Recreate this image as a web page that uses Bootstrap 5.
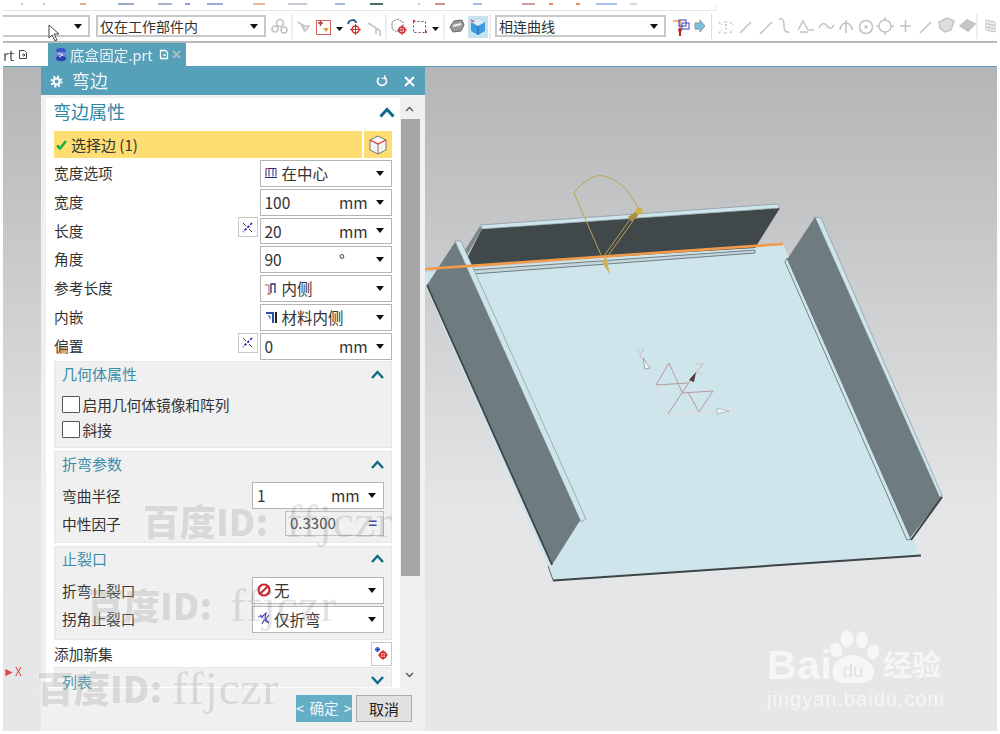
<!DOCTYPE html>
<html lang="zh-CN">
<head>
<meta charset="utf-8">
<title>弯边</title>
<link href="https://cdn.jsdelivr.net/npm/bootstrap@5.3.0/dist/css/bootstrap.min.css" rel="stylesheet">
<style>
html,body{height:734px;overflow:hidden;background:#fff}
body{font-family:"Noto Sans CJK SC","Noto Sans",sans-serif;color:#333;font-size:14.7px;line-height:1.2;position:relative}
.ug-shell{height:731px;margin:0 3px;display:flex;flex-direction:column;filter:blur(.35px)}
.ug-top{height:43px;flex:none;border-bottom:2px solid #b5babc}
.ug-strip{display:block;height:11px}
.ug-bar{height:30px}
.ug-bar svg{flex:none}
.ug-combo{height:22px;background:#fff;border:2px solid #c6c8ca;font-size:14px;color:#333;padding:0 6px 0 2px;flex:none}
.ug-combo.c1{width:87px;border-left:0}
.ug-combo.c2{width:170px;margin-left:6px}
.ug-combo.c3{width:171px}
.ug-caret{width:0;height:0;border-left:4.5px solid transparent;border-right:4.5px solid transparent;border-top:5px solid #111;flex:none}
.ug-tabs{height:23px;flex:none;font-size:14.6px;white-space:nowrap}
.ug-tabs svg{flex:none}
.ug-tabs .t0{width:45px;color:#555;overflow:hidden}
.ug-tab{width:138px;background:#57a0ba;color:#e8f2f6;padding-left:6px}
.ug-tab .nm{margin-left:2px}
.ug-tab .dc{margin-left:6px}
.ug-tab .xx{margin-left:3px}
.ug-view{flex:1;position:relative;border-top:1px solid #57a0ba;background:linear-gradient(#b4b5b7 0,#e4e5e7 66%,#e6e7e9 100%)}
.ug-scene{position:absolute;left:0;top:0;display:block}
.ug-dlg{position:absolute;left:38px;top:0;bottom:0;width:384px;background:#f0f0f0;display:flex;flex-direction:column}
.ug-title{height:28px;flex:none;background:#57a0ba;color:#f2f7f9;font-size:18px;padding:0 10px 0 9px}
.ug-title span{margin-left:9px}
.ug-mid{height:590px;flex:none;margin:3px 0 0 5px;display:flex}
.ug-panel{width:354px;height:590px;background:#fff;padding:0 8px;flex:none}
.ug-head{height:28px;margin-bottom:5px;font-size:18px;color:#2f86a4}
.ug-head span{margin-left:-1px}
.ug-head svg{margin-right:-3px}
.ug-hit{height:27px;margin-bottom:2px;gap:2px;font-size:15px}
.ug-hit .m1{flex:1;background:#fedd72;padding-left:2px;gap:4px;color:#333}
.ug-hit .m2{width:28px;background:#fedd72}
.ug-rows{display:flex;flex-direction:column;gap:2px}
.ug-row{height:26.8px}
.ug-row>span{margin-top:-1px}
.ug-sel{height:26.8px;width:132.5px;background:#fff;border:1px solid #b4b4b4;padding:0 7px 0 4px;flex:none;font-size:15.5px}
.ug-sel .tx{flex:1;white-space:nowrap}
.ug-sel .un{width:28px;margin-right:9px;text-align:left}
.ug-sel.wide{width:132px}
.ug-sel .ic{margin-right:5px;flex:none}
.ug-fx{width:20px;height:20px;background:#fff;border:1px solid #c8c8c8;margin-right:2px;margin-top:-7px}
.ug-grp{background:#f0f0f0;border:1px solid #e6e6e6;padding:0 7px;overflow:hidden}
.ug-grp .gh{height:24px;color:#3a8dab;font-size:15px}
.g1{height:87px;margin-top:1.500px}
.g2{height:92px;margin-top:3px}
.g3{height:94px;margin-top:3px}
.g4{height:20px;overflow:visible;border-bottom:0}
.g3 .gh{height:23px}
.ug-grp.g4 .gh{height:28px}
.g4 .gh svg{margin-top:-4px}
.ug-add{height:27px}
.ug-addb{width:21px;height:24px;background:#fff;border:1px solid #c8c8c8}
.ug-chk{height:25px;gap:3px}
.ug-chk .form-check-input{width:17.5px;height:17.5px;margin:0;border:1px solid #555;border-radius:1px;flex:none}
.ug-chk span{margin-top:1px}
.ug-chks{margin-top:6px}
.ug-ro{height:25px;width:99px;border:1px solid #bdbdbd;padding:0 6px 0 4px;font-size:15px;color:#444}
.ug-ro b{font-weight:700;color:#3a3a9a}
.ug-tight{margin-top:-2px}
.ug-gap2{gap:2px}
.ug-b2{margin-top:6px}
.ug-b3{margin-top:7px}
.ug-scroll{width:19px;height:590px;flex:none}
.ug-arrow{height:21px}
.ug-arrow.dn{height:16px}
.ug-thumb{height:457px;background:#a6a6a6;width:19px;margin-left:1px;flex:none}
.ug-fill{flex:1}
.ug-foot{padding:7px 13px 0 0;gap:4px}
.ug-foot .btn{height:27px;width:56px;padding:0;font-size:14.6px;border-radius:0;line-height:1}
.ug-foot .ug-no{font-size:15px}
.ug-ok{background:#66aec5;border:0;color:#eef7fa;white-space:nowrap;word-spacing:2px}
.ug-no{background:#e1e1e1;border:1px solid #adadad;color:#222}
.ug-nudge{margin-left:-2px}
.ug-wm{position:absolute;display:flex;align-items:center;color:rgba(60,60,60,.14);white-space:nowrap;pointer-events:none;text-shadow:0 0 9px rgba(255,255,255,.35);line-height:1;filter:blur(.35px)}
.ug-wm b{font-family:"Noto Sans CJK SC",sans-serif;font-weight:900;font-size:36.500px}
.ug-wm i{font-family:"Liberation Serif",serif;font-style:normal;font-size:47px;margin-left:18px;letter-spacing:1px}
.w1{left:143px;top:498px}.w2{left:87px;top:582px}.w3{left:37px;top:665px}
.w3 i{margin-left:10px}
.ug-logo{position:absolute;left:767px;top:625px;width:180px;height:90px;color:rgba(255,255,255,.62);pointer-events:none;filter:blur(.35px)}
.ug-logo .bai{position:absolute;left:0;top:20px;font:700 41px/1 "Liberation Sans",sans-serif;letter-spacing:.5px}
.ug-logo .jy{position:absolute;left:116px;top:24px;font:700 29px/1 "Noto Sans CJK SC",sans-serif}
.ug-logo .url{position:absolute;left:0;top:64px;font:400 20px/1 "Liberation Sans",sans-serif;letter-spacing:1px}
.ug-logo svg{position:absolute;left:56px;top:5px}
.ug-cursor{position:absolute;left:47px;top:24px}
.ug-red{position:absolute;left:3px;top:665px;font-size:12px;color:#e04a4a;line-height:1}
</style>
</head>
<body>
<div class="ug-shell">
  <div class="ug-top">
    <svg class="ug-strip" width="994" height="11" viewBox="3 0 994 11" fill="none">
      <path d="M3 10.500H716V4" stroke="#e6e6e6"/>
      <g stroke-width="2">
        <path d="M21 4h2M43 4h2" stroke="#b8c4d8"/><path d="M80 4h6" stroke="#e8b090"/><path d="M118 4h16" stroke="#9aa8c0"/>
        <path d="M158 4h14" stroke="#a8b4c4"/><path d="M185 4h5" stroke="#8aa4d0"/><path d="M207 4h16" stroke="#a0a8d8"/>
        <path d="M253 4h12" stroke="#e8b898"/><path d="M288 4h19" stroke="#c4c8d0"/><path d="M335 4h10" stroke="#a8b8d0"/>
        <path d="M370 4h13" stroke="#4a7068"/><path d="M418 4h2" stroke="#c0c0d0"/><path d="M435 4h10" stroke="#d09090"/>
        <path d="M473 4h9" stroke="#a8c0d8"/><path d="M522 4h13" stroke="#c8a098"/><path d="M549 4h4M576 4h4" stroke="#e88868"/>
        <path d="M596 4h21" stroke="#a8c0e8"/><path d="M630 4h7" stroke="#d8d8d8"/>
      </g>
    </svg>
    <div class="ug-bar d-flex align-items-center">
      <div class="ug-combo c1 d-flex align-items-center justify-content-end"><span class="ug-caret"></span></div>
      <div class="ug-combo c2 d-flex align-items-center justify-content-between"><span>仅在工作部件内</span><span class="ug-caret"></span></div>
      <svg width="229" height="30" viewBox="265 11 229 30" fill="none">
        <path d="M291 14v25M385 14v25M443 14v25M489 14v25" stroke="#dcdcdc"/>
        <g stroke="#c4c4c4" stroke-width="1.600">
          <circle cx="279" cy="23" r="3.500"/><circle cx="274" cy="29" r="3"/><circle cx="283" cy="30" r="3"/>
          <path d="M297 22l6 4v5M308 26h-7l3 5zM367 23l8 5v6M375 28l4 3v5"/>
        </g>
        <rect x="315.500" y="20.500" width="14" height="14" stroke="#d66060"/>
        <path d="M317 23h5M319.500 21v5" stroke="#a04040" stroke-width="1.500"/><path d="M322 28h6l-3 4z" fill="#e0a030"/>
        <path d="M335 27h7l-3.500 4zM431 27h7l-3.500 4z" fill="#111"/>
        <path d="M347 24c1-5 8-5 8-1" stroke="#2a5a90" stroke-width="2"/><circle cx="354.500" cy="29.500" r="3.500" stroke="#d03030" stroke-width="1.500"/><path d="M349 29.500h11M354.500 24v11" stroke="#d03030"/>
        <path d="M396 19l6 3v7l-6 3-5-3v-7z" stroke="#777" stroke-dasharray="2 1"/><circle cx="401" cy="30" r="3" stroke="#d03030" stroke-width="1.500"/><path d="M396 30h10M401 25v10" stroke="#d03030"/>
        <rect x="412.500" y="21.500" width="12" height="11" stroke="#555" stroke-dasharray="2 2"/><path d="M412 21h2M424 32h2" stroke="#d03030" stroke-width="2"/>
        <path d="M449 27l4-6 8-1 2 5-3 6-8 1z" fill="#9a9a9a" stroke="#666"/><path d="M452 26l8-2" stroke="#eee" stroke-width="2"/>
        <rect x="467" y="16" width="20" height="22" fill="#c5e2ee"/>
        <path d="M470 22l7-4 7 4v9l-7 4-7-4z" fill="#3f9be0"/><path d="M470 22l7 4 7-4-7-4z" fill="#d8eaf6"/><path d="M477 26v9" stroke="#1d6ab0"/><path d="M470 20l3 2" stroke="#e04040" stroke-width="1.500"/>
      </svg>
      <div class="ug-combo c3 d-flex align-items-center justify-content-between"><span>相连曲线</span><span class="ug-caret"></span></div>
      <svg width="333" height="30" viewBox="664 11 333 30" fill="none">
        <path d="M671 21h8M678 21v8" stroke="#e8a030" stroke-width="1.500"/><rect x="677" y="20" width="7" height="6" stroke="#3a3ad0"/><rect x="680" y="23" width="7" height="6" stroke="#3a3ad0"/>
        <path d="M678 29v7" stroke="#c02020" stroke-width="2"/><circle cx="678" cy="30" r="2" fill="#b03030"/>
        <path d="M693 23h5v-3l5 6-5 6v-3h-5z" fill="#7fc0d8" stroke="#8a9aa0"/>
        <path d="M709.500 14v25M975 14v25" stroke="#dcdcdc"/>
        <g stroke="#c2c2c2" stroke-width="1.500">
          <path d="M717 22l3 3M728 22l3 3M717 33l3-3M728 33l3-3M722 22h4M722 33h4M724 24v7" stroke-dasharray="2 1.500"/>
          <path d="M738 33l11-11M758 34l12-12M777 19c5-1 5 3 5 6s0 8 5 7"/>
          <path d="M796 30l5-9 5 9M806 30h6M798 32h8"/><path d="M817 28c3-6 6-5 8-2s5 3 7-1"/>
          <path d="M838 30c0-5 4-7 6-7s6 2 6 7M844 20v13"/>
          <circle cx="864" cy="27" r="6.500"/><circle cx="864" cy="27" r="1"/><circle cx="883" cy="26" r="6"/><path d="M883 17v3M883 32v3M874 26h3M889 26h3"/>
          <path d="M898 26h11M903.500 20v12M918 33l11-11"/>
          <path d="M937 22l8-4 7 3-3 9-6 2-5-4z" fill="#dedede"/><path d="M958 26l7-6 8 4-7 7z" fill="#c8c8c8"/><path d="M960 26l9 3M963 23l8 4"/>
          <path d="M984 20l9 2v10l-9-2zM984 23.500l9 2M984 27l9 2M987 21v10M990 21v10" stroke-width="1"/>
        </g>
      </svg>
    </div>
  </div>
  <div class="ug-tabs d-flex">
    <div class="t0 d-flex align-items-center"><span>rt</span>
      <svg class="ms-1" width="10" height="11" viewBox="0 0 10 11" fill="none" stroke="#444"><path d="M1.500 1.500h5l2 2v6h-7z"/><path d="M4 6h3M5.500 4.500l1.500 1.500-1.500 1.500"/></svg></div>
    <div class="ug-tab d-flex align-items-center">
      <svg width="14" height="15" viewBox="0 0 14 15"><ellipse cx="7" cy="3.500" rx="5" ry="2.500" fill="#3d55c8"/><ellipse cx="7" cy="7.500" rx="5.500" ry="2.800" fill="#7482dc"/><ellipse cx="7" cy="11.500" rx="5" ry="2.800" fill="#2f3eb0"/><path d="M4 6l5 2-4 2" stroke="#e8ecff" fill="none"/></svg>
      <span class="nm">底盒固定.prt</span>
      <svg class="dc" width="10" height="11" viewBox="0 0 10 11" fill="none" stroke="#fff" stroke-width="1.300"><path d="M1.500 1.500h5l2 2v6h-7z"/><path d="M4 6h3"/></svg>
      <svg class="xx" width="9" height="9" viewBox="0 0 9 9" stroke="#a8bcc6" stroke-width="2"><path d="M1 1l7 7M8 1l-7 7"/></svg>
    </div>
  </div>
  <div class="ug-view">
    <svg class="ug-scene" width="994" height="664" viewBox="3 67 994 664" fill="none">
      <polygon points="425,272 783,244 919,553 921,556 553,581 548,566 425,285" fill="#cfe5ec"/>
      <path d="M553 580.500L921 555.500" stroke="#3c4446" stroke-width="2"/>
      <path d="M548 566l5 14" stroke="#5c6a6e"/>
      <polygon points="480,226 482,229 463,262 460,258" fill="#7b898d"/>
      <polygon points="482,229 780,208 755,248 463,266" fill="#40484a"/>
      <polygon points="481,225 778,204 780,208 482,229" fill="#cfe5ec" stroke="#7b8a8e" stroke-width=".6"/>
      <polygon points="472,270 755,250 755,253 473,274" fill="#c4d6dc" stroke="#59666a" stroke-width=".8"/>
      <polygon points="427,285 455,242 581,519 552,565" fill="#6e7c80"/>
      <path d="M427 285L552 565" stroke="#3c4446" stroke-width="1.800"/>
      <polygon points="455,241 461,241 586,519 581,522" fill="#cfe5ec" stroke="#6b787c" stroke-width=".5"/>
      <polygon points="786,262 788,258 815,217 942,497 910,538" fill="#6e7c80"/>
      <polygon points="815,217 821,218 942,495 940,498" fill="#cfe5ec" stroke="#6b787c" stroke-width=".5"/>
      <path d="M942 497L911 540" stroke="#3c4446" stroke-width="2"/>
      <polygon points="785,262 787,258 911,539 907,540" fill="#cfe5ec" stroke="#5c6a6e" stroke-width=".8"/>
      <path d="M425 269L783 244" stroke="#f29a4a" stroke-width="2.600"/>
      <path d="M601 255L574 193C583 180 596 174 603 176C618 178 632 194 638 208" stroke="#bda354" stroke-width="1"/>
      <path d="M604 256L631 218M607 257L633 221" stroke="#b8a052"/>
      <polygon points="628,217 637,211 638,216 632,222" fill="#a88f3e"/>
      <circle cx="639" cy="211" r="3.600" fill="#d0b24c"/>
      <polygon points="602,262 606,256 610,275" fill="#cdb35c"/>
      <g stroke-width="1">
        <path d="M668 414L644 362M668 414L726 411" stroke="#dcdcdc" stroke-width="1.400"/>
        <path d="M656 385l13-22 13 29M656 385l32-2M682 393l31-2-14 21M668 414l24-36M688 392l11 20" stroke="#b79a9e"/>
        <path d="M637 349l3.500 5 3.500-5M640.500 354v4M696 364h7l-7 9h7" stroke="#cfc4c6" stroke-width="1.200"/>
        <path d="M730 406l8 9M738 406l-8 9" stroke="#dddfe2" stroke-width="1.200"/>
      </g>
      <polygon points="643,358 650,368 645,369" fill="#f2f4f4" stroke="#70787a" stroke-width=".6"/>
      <polygon points="717,408 729,411 717,414" fill="#eef0f0" stroke="#8a9294" stroke-width=".5"/>
      <polygon points="696,372 694,382 689,380" fill="#52383e"/>
    </svg>
    <div class="ug-dlg">
      <div class="ug-title d-flex align-items-center">
        <svg width="13" height="13" viewBox="0 0 13 13" fill="none" stroke="#fff"><circle cx="6.500" cy="6.500" r="3" stroke-width="2"/><circle cx="6.500" cy="6.500" r="5" stroke-width="2" stroke-dasharray="2 1.930"/></svg>
        <span class="flex-grow-1">弯边</span>
        <svg class="me-3" width="12" height="12" viewBox="0 0 12 12" fill="none" stroke="#fff" stroke-width="1.600"><path d="M3 2.500A4.500 4.500 0 1 0 9 2.500"/><path d="M9 0l-.5 3.500L5.500 3" stroke-width="1.200"/></svg>
        <svg width="11" height="11" viewBox="0 0 11 11" stroke="#fff" stroke-width="2"><path d="M1 1l9 9M10 1l-9 9"/></svg>
      </div>
      <div class="ug-mid">
        <div class="ug-panel">
          <div class="ug-head d-flex align-items-center justify-content-between"><span>弯边属性</span>
            <svg width="16" height="11" viewBox="0 0 16 11" fill="none" stroke="#0f6a86" stroke-width="3"><path d="M1.500 9.500L8 2.500l6.500 7"/></svg></div>
          <div class="ug-hit d-flex">
            <div class="m1 d-flex align-items-center">
              <svg width="11" height="10" viewBox="0 0 11 10" fill="none" stroke="#1fae3c" stroke-width="2.600"><path d="M1 5.500L4 8.500 10 1"/></svg>
              <span>选择边 (1)</span>
            </div>
            <div class="m2 d-flex align-items-center justify-content-center">
              <svg width="20" height="21" viewBox="0 0 20 21" fill="none"><path d="M10 2l8 4v10l-8 4-8-4V6z" fill="#f4f4f4" stroke="#777"/><path d="M2 6l8 4 8-4" stroke="#d83a3a" stroke-width="1.300"/><path d="M10 10v10" stroke="#777"/></svg>
            </div>
          </div>
          <div class="ug-rows">
            <div class="ug-row d-flex align-items-center justify-content-between"><span>宽度选项</span>
              <div class="ug-sel d-flex align-items-center"><svg class="ic" width="12" height="12" viewBox="0 0 12 12" fill="none" stroke="#2b2b80"><path d="M1 1.500h10M1 1.500v8M11 1.500v8M4 1.500v8M8 1.500v8M0 10.500h12"/><path d="M1 1.500h3" stroke="#c03030"/></svg><span class="tx">在中心</span><span class="ug-caret"></span></div></div>
            <div class="ug-row d-flex align-items-center justify-content-between"><span>宽度</span>
              <div class="ug-sel d-flex align-items-center"><span class="tx">100</span><span class="un">mm</span><span class="ug-caret"></span></div></div>
            <div class="ug-row d-flex align-items-center justify-content-between"><span class="flex-grow-1">长度</span>
              <div class="ug-fx d-flex align-items-center justify-content-center"><svg width="13" height="13" viewBox="0 0 13 13" fill="none"><path d="M2 2l3 3" stroke="#444"/><path d="M11 2L2 11" stroke="#2222bb" stroke-dasharray="2.500 1.500" stroke-width="1.600"/><path d="M8 8l3 3" stroke="#444"/></svg></div>
              <div class="ug-sel d-flex align-items-center"><span class="tx">20</span><span class="un">mm</span><span class="ug-caret"></span></div></div>
            <div class="ug-row d-flex align-items-center justify-content-between"><span>角度</span>
              <div class="ug-sel d-flex align-items-center"><span class="tx">90</span><span class="un">°</span><span class="ug-caret"></span></div></div>
            <div class="ug-row d-flex align-items-center justify-content-between"><span>参考长度</span>
              <div class="ug-sel d-flex align-items-center"><svg class="ic" width="12" height="13" viewBox="0 0 12 13" fill="none"><path d="M0 3h4M4 3v9M2 12h4" stroke="#d04040"/><path d="M6 11V2h4v9" stroke="#2b2b70" stroke-width="1.300"/></svg><span class="tx">内侧</span><span class="ug-caret"></span></div></div>
            <div class="ug-row d-flex align-items-center justify-content-between"><span>内嵌</span>
              <div class="ug-sel d-flex align-items-center"><svg class="ic" width="12" height="13" viewBox="0 0 12 13" fill="none"><path d="M1 2h7v10" stroke="#2b4fa0" stroke-width="2"/><path d="M3 5h2v3" stroke="#2b4fa0"/><path d="M11 1v11" stroke="#222" stroke-width="2"/></svg><span class="tx">材料内侧</span><span class="ug-caret"></span></div></div>
            <div class="ug-row d-flex align-items-center justify-content-between"><span class="flex-grow-1">偏置</span>
              <div class="ug-fx d-flex align-items-center justify-content-center"><svg width="13" height="13" viewBox="0 0 13 13" fill="none"><path d="M2 2l3 3" stroke="#444"/><path d="M11 2L2 11" stroke="#2222bb" stroke-dasharray="2.500 1.500" stroke-width="1.600"/><path d="M8 8l3 3" stroke="#444"/></svg></div>
              <div class="ug-sel d-flex align-items-center"><span class="tx">0</span><span class="un">mm</span><span class="ug-caret"></span></div></div>
          </div>
          <div class="ug-grp g1">
            <div class="gh d-flex align-items-center justify-content-between"><span>几何体属性</span>
              <svg width="13" height="9" viewBox="0 0 13 9" fill="none" stroke="#0f6a86" stroke-width="2.400"><path d="M1 8l5.500-6L12 8"/></svg></div>
            <div class="ug-chks">
              <div class="ug-chk d-flex align-items-center"><input class="form-check-input" type="checkbox" aria-label="启用几何体镜像和阵列"><span>启用几何体镜像和阵列</span></div>
              <div class="ug-chk d-flex align-items-center"><input class="form-check-input" type="checkbox" aria-label="斜接"><span>斜接</span></div>
            </div>
          </div>
          <div class="ug-grp g2">
            <div class="gh d-flex align-items-center justify-content-between"><span>折弯参数</span>
              <svg width="13" height="9" viewBox="0 0 13 9" fill="none" stroke="#0f6a86" stroke-width="2.400"><path d="M1 8l5.500-6L12 8"/></svg></div>
            <div class="ug-b2 d-flex flex-column gap-1">
              <div class="d-flex align-items-center justify-content-between"><span>弯曲半径</span>
                <div class="ug-sel wide d-flex align-items-center"><span class="tx">1</span><span class="un">mm</span><span class="ug-caret"></span></div></div>
              <div class="ug-tight d-flex align-items-center justify-content-between"><span>中性因子</span>
                <div class="ug-ro d-flex align-items-center"><span class="flex-grow-1">0.3300</span><b>=</b></div></div>
            </div>
          </div>
          <div class="ug-grp g3">
            <div class="gh d-flex align-items-center justify-content-between"><span>止裂口</span>
              <svg width="13" height="9" viewBox="0 0 13 9" fill="none" stroke="#0f6a86" stroke-width="2.400"><path d="M1 8l5.500-6L12 8"/></svg></div>
            <div class="ug-gap2 ug-b3 d-flex flex-column">
              <div class="d-flex align-items-center justify-content-between"><span>折弯止裂口</span>
                <div class="ug-sel wide d-flex align-items-center"><svg class="ic" width="14" height="14" viewBox="0 0 14 14" fill="none" stroke="#c8202c" stroke-width="2.200"><circle cx="7" cy="7" r="5.500"/><path d="M3 11l8-8"/></svg><span class="tx ug-nudge">无</span><span class="ug-caret"></span></div></div>
              <div class="d-flex align-items-center justify-content-between"><span>拐角止裂口</span>
                <div class="ug-sel wide d-flex align-items-center"><svg class="ic" width="14" height="14" viewBox="0 0 14 14" fill="none" stroke="#3a3ab0" stroke-width="1.200"><path d="M1 5l5-1 3-3-1 5 4 5-5-3-2 4M3 3l3 3M8 8l4-5"/></svg><span class="tx ug-nudge">仅折弯</span><span class="ug-caret"></span></div></div>
            </div>
          </div>
          <div class="ug-add d-flex align-items-center justify-content-between"><span>添加新集</span>
            <div class="ug-addb d-flex align-items-center justify-content-center"><svg width="15" height="15" viewBox="0 0 15 15" fill="none"><path d="M1 3.500h5M3.500 1v5" stroke="#1a4fe0" stroke-width="2"/><circle cx="9" cy="9" r="3" stroke="#d01818" stroke-width="1.500"/><path d="M4 9h10M9 4v10" stroke="#d01818"/></svg></div></div>
          <div class="ug-grp g4">
            <div class="gh d-flex align-items-center justify-content-between"><span>列表</span>
              <svg width="13" height="9" viewBox="0 0 13 9" fill="none" stroke="#0f6a86" stroke-width="2.400"><path d="M1 1l5.500 6L12 1"/></svg></div>
          </div>
        </div>
        <div class="ug-scroll d-flex flex-column">
          <div class="ug-arrow d-flex align-items-center justify-content-center"><svg width="9" height="6" viewBox="0 0 9 6" fill="none" stroke="#555" stroke-width="1.300"><path d="M1 5l3.500-3.500L8 5"/></svg></div>
          <div class="ug-thumb"></div>
          <div class="ug-fill"></div>
          <div class="ug-arrow dn d-flex align-items-start justify-content-center"><svg width="9" height="6" viewBox="0 0 9 6" fill="none" stroke="#555" stroke-width="1.300"><path d="M1 1l3.500 3.500L8 1"/></svg></div>
        </div>
      </div>
      <div class="ug-foot d-flex justify-content-end">
        <button type="button" class="btn ug-ok">&lt; 确定 &gt;</button>
        <button type="button" class="btn ug-no">取消</button>
      </div>
    </div>
  </div>
</div>
<svg class="ug-cursor" width="14" height="19" viewBox="0 0 14 19"><path d="M2 1v13l3-3 3 6 2-1-3-6h5z" fill="#fff" stroke="#444"/></svg>
<div class="ug-red">►X</div>
<div class="ug-wm w1"><b>百度ID:</b><i>ffjczr</i></div>
<div class="ug-wm w2"><b>百度ID:</b><i>ffjczr</i></div>
<div class="ug-wm w3"><b>百度ID:</b><i>ffjczr</i></div>
<div class="ug-logo">
  <span class="bai">Bai</span>
  <svg width="64" height="60" viewBox="0 0 64 60" fill="currentColor">
    <ellipse cx="24" cy="9" rx="6.500" ry="8.500"/><ellipse cx="39" cy="10" rx="6" ry="8.500"/><ellipse cx="13" cy="20" rx="6" ry="7.500" transform="rotate(-20 13 20)"/><ellipse cx="50" cy="22" rx="6" ry="7.500" transform="rotate(20 50 22)"/>
    <path d="M10 38c2-9 14-13 20-13s17 6 21 13c2 8-4 15-12 15H20C12 53 8 46 10 38z"/>
    <text x="30" y="47" text-anchor="middle" font-family="Liberation Sans, sans-serif" font-size="19" fill="#dfe0e2">du</text>
  </svg>
  <span class="jy">经验</span>
  <span class="url">jingyan.baidu.com</span>
</div>
<script src="https://cdn.jsdelivr.net/npm/bootstrap@5.3.0/dist/js/bootstrap.bundle.min.js"></script>
</body>
</html>
